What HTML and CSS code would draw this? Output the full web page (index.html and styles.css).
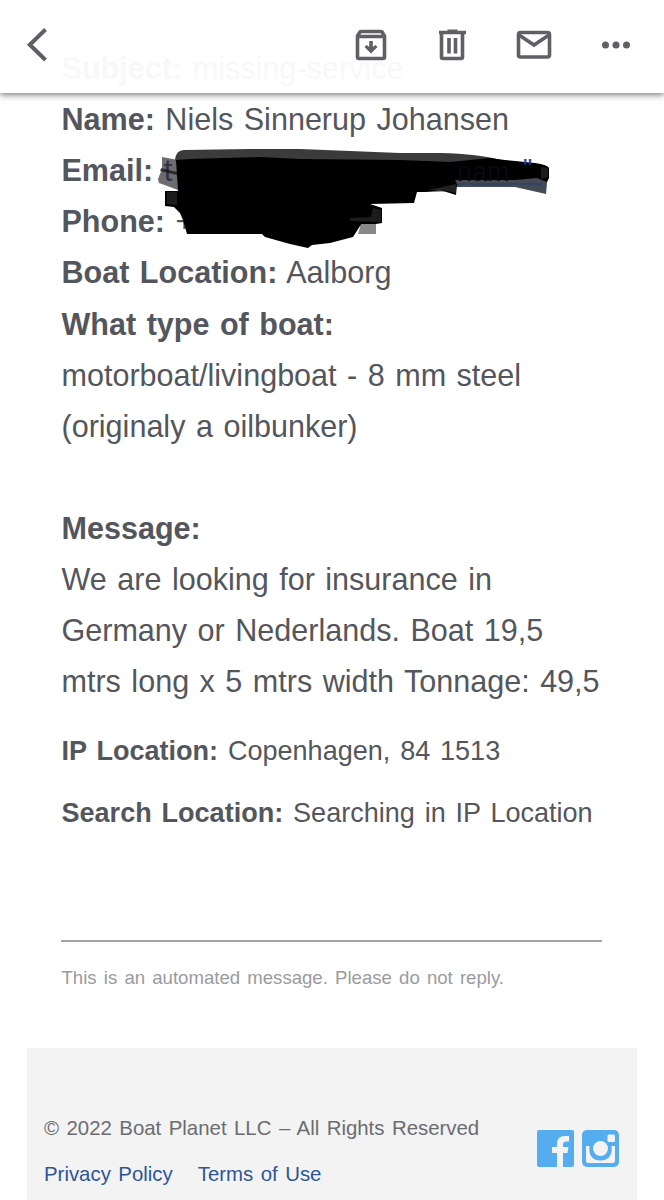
FILE: index.html
```html
<!DOCTYPE html>
<html lang="en">
<head>
	<meta charset="utf-8">
	<title>missing-service</title>
	<link rel="stylesheet" href="styles.css">
</head>
<body>
	<header class="toolbar">
		<svg class="back" width="28" height="40" viewBox="0 0 28 40"><path d="M21.500 5.500L5.800 20.700L21.500 36"/></svg>
		<div class="actions">
			<svg width="34" height="34" viewBox="0 0 34 34">
				<path class="line" d="M3.500 8L6 4Q6.500 3.500 7.500 3.500H26.500Q27.500 3.500 28 4L30.500 8V29Q30.500 30.500 29 30.500H5Q3.500 30.500 3.500 29Z"/>
				<path class="line" d="M3.500 8.500H30.500M17 13V22"/>
				<path class="fill" d="M10.500 19L12.500 17L17 20L21.500 17L23.500 19L17 25.500Z"/>
			</svg>
			<svg width="34" height="34" viewBox="0 0 34 34">
				<path class="line" d="M6.500 5V29Q6.500 30.500 8 30.500H26Q27.500 30.500 27.500 29V5"/>
				<path class="line" d="M4 4.500H31M14 10V25.500M20.500 10V25.500"/>
				<path class="fill" d="M12.500 1.500H22.500V5H12.500Z"/>
			</svg>
			<svg width="36" height="34" viewBox="0 0 36 34">
				<rect class="line" x="2.500" y="4.500" width="31" height="24.500" rx="2"/>
				<path class="line" d="M3 7L18 17L33 7"/>
			</svg>
			<svg width="34" height="34" viewBox="0 0 34 34">
				<circle class="fill" cx="6.500" cy="17" r="3.500"/>
				<circle class="fill" cx="17" cy="17" r="3.500"/>
				<circle class="fill" cx="27.500" cy="17" r="3.500"/>
			</svg>
		</div>
	</header>

	<main class="message">
		<div class="details">
			<p><b>Name:</b> Niels Sinnerup Johansen</p>
			<p class="email"><b>Email:</b> <a>t</a></p>
			<p><b>Phone:</b> +</p>
			<p><b>Boat Location:</b> Aalborg</p>
			<p><b>What type of boat:</b></p>
			<p>motorboat/livingboat - 8 mm steel<br>(originaly a oilbunker)</p>
			<p class="text"><b>Message:</b><br>We are looking for insurance in<br>Germany or Nederlands. Boat 19,5<br>mtrs long x 5 mtrs width Tonnage: 49,5</p>
			<svg class="marker" width="400" height="110" viewBox="155 144 400 110">
				<defs>
					<filter id="soft" x="-5%" y="-5%" width="110%" height="110%"><feGaussianBlur stdDeviation="0.7"/></filter>
				</defs>
				<g filter="url(#soft)">
					<path fill="#30343c" fill-opacity=".72" d="M162 157L178 160V190L170 187L159 183L158 179L162 169Z"/>
					<path fill="#111" fill-opacity=".7" d="M161 168L177 172V175L160 171Z"/>
					<path fill="#3b3b3b" d="M175 160Q176 150 184 150L250 149L300 149L350 151L400 153L440 153Q480 154 500 160L520 165H180Z"/>
					<path fill="#454b55" d="M440 177L548 172L546 194L515 187H456V191L425 192Z"/>
					<path fill="#000" d="M176 160L190 159L260 157L300 159L400 160L450 162L490 158L505 160L535 163Q548 165 549 168V178L547 182L537 178L515 180H455L457 184L456 195L440 190L425 192H417L414 203L370 204L382 208L382 223L376 224L360 226L353 237L330 243L312 245L308 248L290 244L265 237L262 234H187L183 220L180 213L174 207L165 206V191H178Z"/>
					<path fill="#1c1c1c" d="M167 192H177V205L167 204ZM373 208L381 210V222L350 221V218L371 217ZM541 167L548 168V177L541 179Z"/>
					<path fill="#888" d="M361 224H376V234H358Z"/>
					<path fill="#222" d="M428 190L456 184V193L443 190Z"/>
					<path stroke="#263d6d" stroke-width="1.200" d="M458 184H543"/>
				</g>
				<text class="trace" x="457" y="181">nam</text>
				<text class="tips" x="523" y="177">"</text>
			</svg>
		</div>
		<div class="location">
			<p><b>IP Location:</b> Copenhagen, 84 1513</p>
			<p><b>Search Location:</b> Searching in IP Location</p>
		</div>
		<hr>
		<p class="notice">This is an automated message. Please do not reply.</p>
	</main>

	<footer class="footer">
		<div class="legal">
			<p>© 2022 Boat Planet LLC – All Rights Reserved</p>
			<nav><a>Privacy Policy</a><a>Terms of Use</a></nav>
		</div>
		<div class="social">
			<svg width="37" height="37" viewBox="0 0 37 37">
				<rect width="37" height="37" rx="2" fill="#55acee"/>
				<path fill="#f3f3f3" d="M20 37V23H15V17H20V14Q20 6 28 6H32V11.500H29Q26 11.500 26 15V17H31.500L30.500 23H26V37Z"/>
			</svg>
			<svg width="37" height="37" viewBox="0 0 37 37">
				<rect width="37" height="37" rx="5" fill="#55acee"/>
				<path fill="#f3f3f3" d="M4 16H7.500Q6 30 18.500 30.500Q31 30 29.500 16H33V31Q33 33 31 33H6Q4 33 4 31Z"/>
				<circle cx="18.500" cy="18.500" r="7.500" fill="#f3f3f3"/>
				<rect x="25.500" y="4.500" width="7.500" height="7.500" rx="1.500" fill="#f3f3f3"/>
			</svg>
		</div>
	</footer>

	<div class="ghost"><b>Subject:</b> missing-service</div>
</body>
</html>
```
FILE: styles.css
```css
html, body {
	margin: 0;
	padding: 0;
	height: 1200px;
	overflow: hidden;
	background-color: #fff;
	color: #54565d;
	font-family: "Liberation Sans", Arial, sans-serif;
}
p {
	margin: 0;
	white-space: nowrap;
}
.toolbar {
	box-sizing: border-box;
	height: 93px;
	padding: 24px 31px 0 24px;
	display: flex;
	justify-content: space-between;
	background-color: #fff;
	box-shadow: 0 2px 6px rgba(0, 0, 0, .5);
}
.back, .line {
	fill: none;
	stroke: #5f6065;
	stroke-width: 3.6;
}
.back {
	stroke-width: 4;
}
.actions {
	position: relative;
	z-index: 1;
	display: flex;
	gap: 47px;
	padding-top: 4px;
}
.fill {
	fill: #5f6065;
}
.ghost {
	position: absolute;
	top: 43px;
	left: 61.5px;
	color: #f8f8f9;
	font-size: 30.6px;
	line-height: 51.2px;
	word-spacing: 2px;
}
.message {
	padding: 1px 62px 0 61.5px;
}
.details {
	position: relative;
	font-size: 30.55px;
	line-height: 51.13px;
	word-spacing: 2px;
}
.text {
	margin-top: 51px;
}
a {
	color: #2f5597;
}
.email a {
	color: #263d6d;
}
.marker {
	position: absolute;
	top: 50px;
	left: 93.5px;
}
.trace {
	font-size: 27px;
	fill: #080a10;
}
.tips {
	font-size: 26px;
	fill: #263d9d;
}
.location {
	margin-top: 14px;
	font-size: 27.05px;
	line-height: 61.4px;
	word-spacing: 2.3px;
}
hr {
	margin: 95.5px 0 0 -0.5px;
	border: 0;
	height: 2px;
	background-color: #a3a3a5;
}
.notice {
	margin-top: 19px;
	color: #9a9b9e;
	font-size: 18.6px;
	line-height: 34px;
	word-spacing: 2px;
}
.footer {
	box-sizing: border-box;
	height: 152px;
	margin: 53px 27px 0;
	padding: 57px 18px 0 17px;
	display: flex;
	justify-content: space-between;
	background-color: #f3f3f3;
	color: #6b6c70;
	font-size: 20.4px;
	line-height: 46px;
	word-spacing: 1.8px;
}
.legal nav {
	display: flex;
	gap: 25px;
}
.social {
	display: flex;
	gap: 8px;
	padding-top: 25px;
}
```
